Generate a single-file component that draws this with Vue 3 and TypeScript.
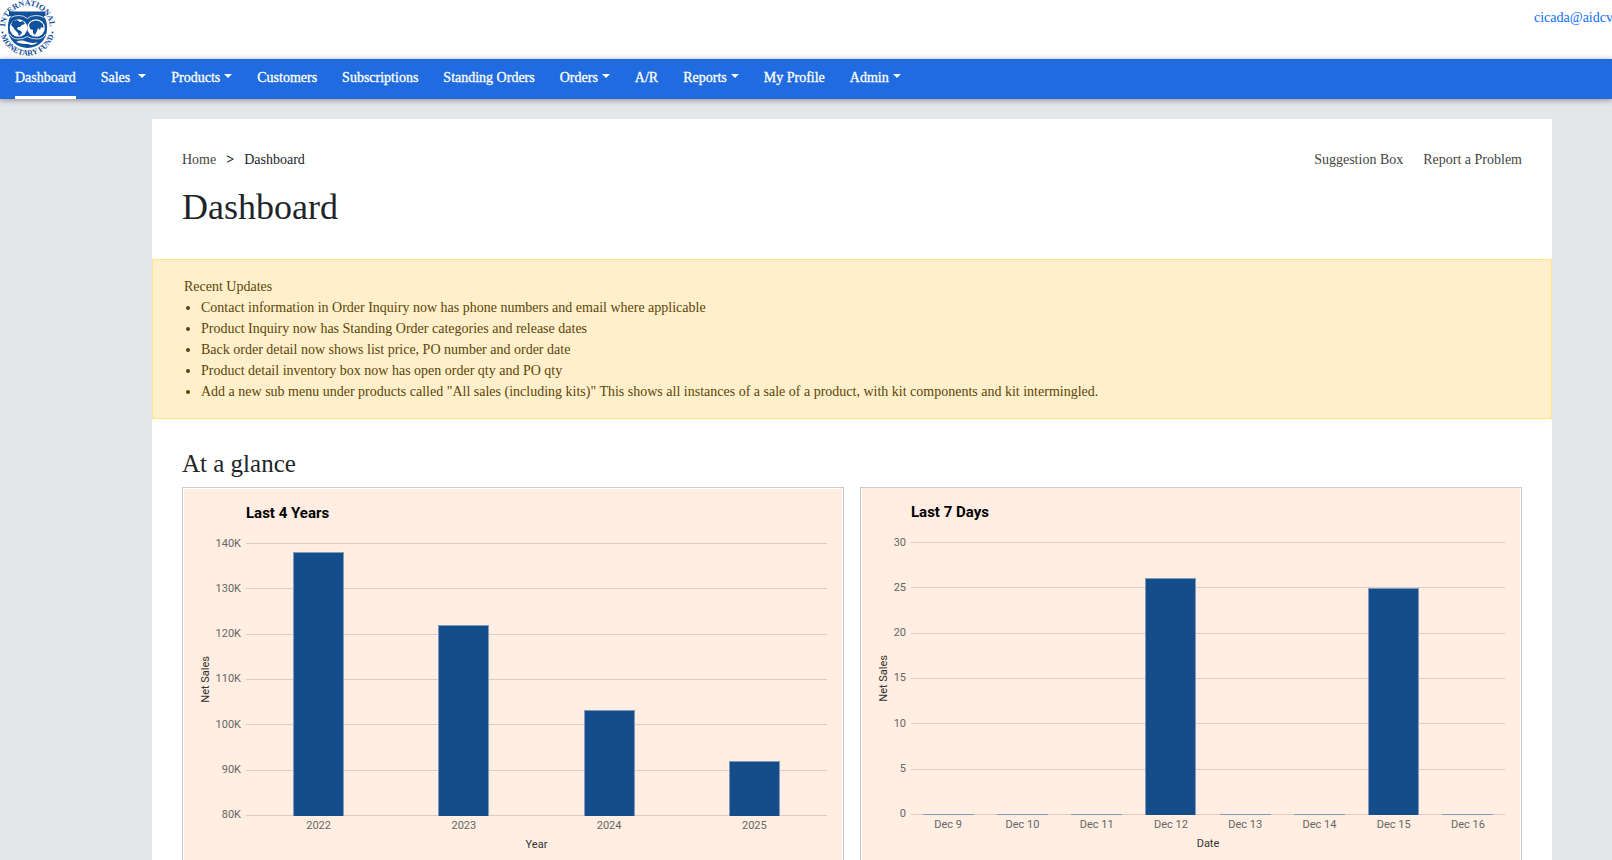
<script setup lang="ts">
interface NavItem {
  label: string
  menu?: boolean
  active?: boolean
  wide?: boolean
}

interface Bar {
  label: string
  value: number
}

interface Chart {
  id: string
  title: string
  axis: string
  ticks: string[]
  min: number
  max: number
  bars: Bar[]
}

const navItems: NavItem[] = [
  { label: 'Dashboard', active: true },
  { label: 'Sales', menu: true, wide: true },
  { label: 'Products', menu: true },
  { label: 'Customers' },
  { label: 'Subscriptions' },
  { label: 'Standing Orders' },
  { label: 'Orders', menu: true },
  { label: 'A/R' },
  { label: 'Reports', menu: true },
  { label: 'My Profile' },
  { label: 'Admin', menu: true },
]

const updates: string[] = [
  'Contact information in Order Inquiry now has phone numbers and email where applicable',
  'Product Inquiry now has Standing Order categories and release dates',
  'Back order detail now shows list price, PO number and order date',
  'Product detail inventory box now has open order qty and PO qty',
  'Add a new sub menu under products called "All sales (including kits)" This shows all instances of a sale of a product, with kit components and kit intermingled.',
]

const charts: Chart[] = [
  {
    id: 'years',
    title: 'Last 4 Years',
    axis: 'Year',
    ticks: ['140K', '130K', '120K', '110K', '100K', '90K', '80K'],
    min: 80,
    max: 140,
    bars: [
      { label: '2022', value: 138 },
      { label: '2023', value: 122 },
      { label: '2024', value: 103.2 },
      { label: '2025', value: 92.2 },
    ],
  },
  {
    id: 'days',
    title: 'Last 7 Days',
    axis: 'Date',
    ticks: ['30', '25', '20', '15', '10', '5', '0'],
    min: 0,
    max: 30,
    bars: [
      { label: 'Dec 9', value: 0 },
      { label: 'Dec 10', value: 0 },
      { label: 'Dec 11', value: 0 },
      { label: 'Dec 12', value: 26 },
      { label: 'Dec 13', value: 0 },
      { label: 'Dec 14', value: 0 },
      { label: 'Dec 15', value: 24.9 },
      { label: 'Dec 16', value: 0 },
    ],
  },
]

function barHeight(chart: Chart, bar: Bar): string {
  return `${((bar.value - chart.min) / (chart.max - chart.min)) * 100}%`
}
</script>

<template>
  <div class="page">
    <header class="top">
      <a class="logo" href="#" aria-label="International Monetary Fund">
        <svg viewBox="0 0 58 58" width="58" height="58">
          <defs>
            <path id="ring-top" d="M6.400 35.500A22.400 22.400 0 1 1 48.600 35.500" />
            <path id="ring-bottom" d="M0 28A27.500 27.500 0 0 0 55 28" />
          </defs>
          <g class="ring">
            <text><textPath href="#ring-top" startOffset="50%">INTERNATIONAL</textPath></text>
            <text><textPath href="#ring-bottom" startOffset="50%">MONETARY FUND</textPath></text>
          </g>
          <circle cx="2.500" cy="32.500" r="1" fill="#11509a" />
          <circle cx="52.500" cy="32.500" r="1" fill="#11509a" />
          <path
            fill="#11509a"
            d="M9 11.500H45.500V16H43.500Q47.500 21 47 29A19.500 19 0 0 1 8 29Q7.500 21 11 16H9Z"
          />
          <path d="M11 17.500Q14 15.500 19 15.500Q24 15.500 27.300 18.500Q30.500 15.500 36 15.500Q41 15.500 43.500 17.500" fill="none" stroke="#fff" stroke-width=".8" />
          <circle cx="18.500" cy="28" r="8.800" fill="#fff" />
          <circle cx="36" cy="28" r="8.800" fill="#fff" />
          <path
            fill="#11509a"
            d="M11 25L13 21 17 20 20 22 23 21 25 24 22 25 20 27 18 27 17 29 21 31 22 33 19 36 18 33 15 30 13 27ZM29 25L31 22 35 20.500 39 21 43 24 43.500 28 41 27 40 30 38 28 37 31 35 35 33 33 33 30 30 29Z"
          />
          <path d="M9.500 34Q12 39 18 39Q24 39 27.300 36.500Q31 39 37 39Q43 39 45.500 34" fill="none" stroke="#fff" stroke-width=".8" />
          <path d="M16 42Q21 39.500 26 41.500Q32 44 38 42Q34 46.500 28 44Q21 44.500 16 42Z" fill="#fff" />
        </svg>
      </a>
      <a class="account" href="#">cicada@aidcv</a>
    </header>

    <nav class="nav" aria-label="Main">
      <a
        v-for="item in navItems"
        :key="item.label"
        href="#"
        class="nav-link"
        :class="{ active: item.active, menu: item.menu, wide: item.wide }"
        >{{ item.label }}</a
      >
    </nav>

    <main class="main">
      <div class="heading">
        <div class="crumb-row">
          <nav class="crumbs" aria-label="Breadcrumb">
            <a href="#">Home</a>
            <span class="strong">&gt;</span>
            <span>Dashboard</span>
          </nav>
          <div class="tools">
            <a href="#">Suggestion Box</a>
            <a href="#">Report a Problem</a>
          </div>
        </div>
        <h1>Dashboard</h1>
      </div>

      <section class="notice">
        <div>Recent Updates</div>
        <ul>
          <li v-for="update in updates" :key="update">{{ update }}</li>
        </ul>
      </section>

      <section class="glance">
        <h2>At a glance</h2>
        <div class="cards">
          <div v-for="chart in charts" :key="chart.id" class="card" :class="chart.id">
            <figure class="chart">
              <figcaption>{{ chart.title }}</figcaption>
              <div class="y-title">Net Sales</div>
              <div class="y-ticks">
                <span v-for="tick in chart.ticks" :key="tick">{{ tick }}</span>
              </div>
              <div class="lines">
                <i v-for="tick in chart.ticks" :key="tick"></i>
              </div>
              <div class="bars">
                <div v-for="bar in chart.bars" :key="bar.label" class="slot">
                  <div class="bar" :style="{ height: barHeight(chart, bar) }"></div>
                </div>
              </div>
              <div class="x-ticks">
                <span v-for="bar in chart.bars" :key="bar.label">{{ bar.label }}</span>
              </div>
              <div class="x-title">{{ chart.axis }}</div>
            </figure>
          </div>
        </div>
      </section>
    </main>
  </div>
</template>

<style>
body {
  margin: 0;
  background: #e4e6ea;
}
</style>

<style scoped>
.page {
  height: 100vh;
  overflow: hidden;
  background: #e4e6ea;
  color: #212529;
  font-family: 'Liberation Serif', 'Times New Roman', serif;
  font-size: 14px;
  line-height: 21px;
}

a {
  color: inherit;
  text-decoration: none;
}

.top {
  display: flex;
  justify-content: space-between;
  align-items: flex-start;
  height: 59px;
  background: #fff;
}

.logo {
  display: block;
  height: 58px;
}

.logo svg {
  display: block;
}

.ring text {
  fill: #11509a;
  font-size: 8px;
  font-weight: 700;
  text-anchor: middle;
}

.account {
  width: 78px;
  margin-top: 7px;
  overflow: hidden;
  white-space: nowrap;
  color: #0d6efd;
}

.nav {
  position: relative;
  display: flex;
  gap: 25px;
  height: 40px;
  padding-left: 15px;
  background: #206be0;
  box-shadow: 0 1px 6px rgba(0, 0, 0, 0.4);
  color: #fff;
}

.nav-link {
  box-sizing: border-box;
  height: 40px;
  padding-top: 8px;
  border-bottom: 3px solid transparent;
  white-space: nowrap;
  -webkit-text-stroke: 0.3px currentColor;
}

.nav-link.active {
  border-bottom-color: #fff;
}

.nav-link.menu::after {
  content: '';
  display: inline-block;
  margin-left: 4px;
  vertical-align: 4px;
  border-top: 4px solid #fff;
  border-right: 4px solid transparent;
  border-left: 4px solid transparent;
}

.nav-link.wide::after {
  margin-left: 8px;
}

.main {
  margin: 20px 60px 0 152px;
  background: #fff;
}

.heading {
  padding: 30px 30px 31px;
}

.crumb-row {
  display: flex;
  justify-content: space-between;
  margin-bottom: 16px;
}

.crumbs {
  display: flex;
  gap: 10px;
}

.strong {
  font-weight: 700;
}

.crumbs a,
.tools {
  color: #444;
}

.tools {
  display: flex;
  gap: 20px;
}

h1,
h2 {
  margin: 0;
  font-weight: 400;
}

h1 {
  font-size: 36px;
  line-height: 42px;
}

.notice {
  padding: 16px 31px;
  border: 1px solid #ffe28a;
  background: #fff0cb;
  color: #5c4409;
}

.notice ul {
  margin: 0;
  padding-left: 17px;
}

.glance {
  padding: 30px;
}

h2 {
  margin-bottom: 8px;
  font-size: 25px;
  line-height: 30px;
}

.cards {
  display: grid;
  grid-template-columns: 1fr 1fr;
  gap: 16px;
}

.card {
  padding: 1px;
  border: 1px solid #ccc;
}

.card.days {
  padding-top: 0;
}

.chart {
  display: grid;
  grid-template-columns: 30px 32px minmax(0, 1fr);
  grid-template-rows: 54px 273px 20px 17px;
  margin: 0;
  padding: 0 15px 40px 0;
  background: #ffeee1;
  font-family: Roboto, 'Open Sans', sans-serif;
  font-size: 11px;
  line-height: 16px;
  color: #666;
}

.days .chart {
  grid-template-columns: 30px 19px minmax(0, 1fr);
}

figcaption {
  grid-area: 1 / 3;
  padding-top: 14px;
  color: #000;
  font-size: 15px;
  font-weight: 700;
  line-height: 20px;
}

.y-title {
  grid-area: 2 / 1;
  align-self: center;
  justify-self: end;
  writing-mode: vertical-rl;
  transform: rotate(180deg);
  color: #333;
}

.y-ticks,
.lines {
  display: flex;
  flex-direction: column;
  justify-content: space-between;
}

.y-ticks {
  grid-area: 2 / 2;
  align-items: flex-end;
  padding-right: 5px;
}

.y-ticks span {
  display: flex;
  align-items: center;
  height: 1px;
}

.lines {
  grid-area: 2 / 3;
}

.lines i {
  height: 1px;
  background: #dccdc2;
}

.bars {
  grid-area: 2 / 3;
  display: flex;
}

.slot {
  display: flex;
  flex: 1;
  align-items: flex-end;
  justify-content: center;
}

.bar {
  box-sizing: border-box;
  width: 51px;
  min-height: 1px;
  border: 1px solid #7f9aba;
  border-bottom-width: 0;
  background: #154d8b;
}

.x-ticks {
  grid-area: 3 / 3;
  display: flex;
  padding-top: 2px;
}

.x-ticks span {
  flex: 1;
  text-align: center;
}

.x-title {
  grid-area: 4 / 3;
  padding-top: 1px;
  text-align: center;
  color: #333;
}
</style>
